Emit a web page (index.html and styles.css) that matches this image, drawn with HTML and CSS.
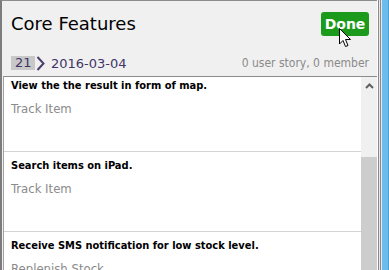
FILE: index.html
```html
<!DOCTYPE html>
<html lang="en">
<head>
  <meta charset="UTF-8">
  <title>Core Features</title>
  <link rel="stylesheet" href="styles.css">
</head>
<body>
  <div class="screen">
    <div class="window">
      <div class="header">
        <div class="title-row">
          <h1>Core Features</h1>
          <button class="done">Done</button>
        </div>
        <div class="meta-row">
          <span class="crumb-num">21</span>
          <svg class="crumb-arrow" width="9" height="15" viewBox="0 0 9 15"><path d="M1.5 1 L7.5 7.5 L1.5 14" fill="none" stroke="#4b3f6b" stroke-width="2"/></svg>
          <span class="crumb-date">2016-03-04</span>
          <span class="stats">0 user story, 0 member</span>
        </div>
      </div>
      <div class="list-box">
        <div class="list">
          <div class="item first">
            <div class="item-title">View the the result in form of map.</div>
            <div class="item-sub">Track Item</div>
          </div>
          <div class="item">
            <div class="item-title">Search items on iPad.</div>
            <div class="item-sub">Track Item</div>
          </div>
          <div class="item">
            <div class="item-title">Receive SMS notification for low stock level.</div>
            <div class="item-sub">Replenish Stock</div>
          </div>
        </div>
        <div class="scrollbar">
          <div class="scroll-up">
            <svg width="9" height="6" viewBox="0 0 9 6"><path d="M1 5 L4.5 1.5 L8 5" fill="none" stroke="#606060" stroke-width="2"/></svg>
          </div>
          <div class="scroll-thumb"></div>
        </div>
      </div>
    </div>
    <div class="edge"></div>
    <svg class="cursor" width="13" height="20" viewBox="0 0 13 20"><path d="M0.5 0.5 L0.5 16 L4 12.5 L6.5 18.5 L9 17.5 L6.5 11.5 L11.5 11.5 Z" fill="#fff" stroke="#000" stroke-width="1"/></svg>
  </div>
</body>
</html>
```
FILE: styles.css
```css
body {
  margin: 0;
  font-family: 'DejaVu Sans', Tahoma, sans-serif;
  background: #fff;
}

.screen {
  position: relative;
  display: flex;
  width: 389px;
  height: 270px;
  overflow: hidden;
}

.window {
  flex: 1;
  display: flex;
  flex-direction: column;
  border-top: 1px solid #8c8c8c;
  border-left: 2px solid #7c7c7c;
  background: #f0f0f0;
}

.edge {
  width: 12px;
  background: linear-gradient(to right,
    #fff 0, #fff 1px,
    #8a8a8a 1px, #8a8a8a 2px,
    #e8e8e8 2px, #e8e8e8 3px,
    #8a8a8a 3px, #8a8a8a 4px,
    #e8e8e8 4px, #e8e8e8 5px,
    #6bbdee 5px, #6bbdee 11px,
    #4f9fd0 11px);
}

.header {
  height: 75px;
  padding: 0 0 0 9px;
  box-sizing: border-box;
}

.title-row {
  display: flex;
  align-items: center;
  justify-content: space-between;
  height: 45px;
  padding-right: 8px;
}

h1 {
  margin: 0;
  font-size: 18px;
  font-weight: normal;
  color: #000;
}

.done {
  width: 48px;
  height: 24px;
  border: none;
  border-radius: 3px;
  background: #1b9a1b;
  color: #fff;
  font-family: inherit;
  font-size: 14px;
  font-weight: bold;
  padding: 0;
  margin-top: 1px;
}

.meta-row {
  display: flex;
  align-items: center;
  height: 16px;
  margin-top: 9px;
  padding-right: 8px;
}

.crumb-num {
  display: inline-block;
  width: 24px;
  height: 14px;
  line-height: 14px;
  background: #c8c8c8;
  color: #3f3566;
  font-size: 13px;
  padding-left: 4px;
  box-sizing: border-box;
}

.crumb-arrow {
  margin: 0 6px 0 1px;
}

.crumb-date {
  color: #3f3566;
  font-size: 13px;
}

.stats {
  margin-left: auto;
  color: #8a8a8a;
  font-family: 'DejaVu Sans Condensed', 'DejaVu Sans', sans-serif;
  font-stretch: condensed;
  font-size: 12px;
}

.list-box {
  flex: 1;
  display: flex;
  margin-left: 1px;
  border-top: 1px solid #8c8c8c;
  border-left: 1px solid #a0a0a0;
  background: #fff;
  overflow: hidden;
}

.list {
  flex: 1;
}

.item {
  height: 80px;
  padding: 7px 0 0 7px;
  box-sizing: border-box;
  border-bottom: 1px solid #d4d4d4;
}

.item.first {
  height: 75px;
  padding-top: 2px;
}

.item-title {
  font-family: 'DejaVu Sans Condensed', 'DejaVu Sans', sans-serif;
  font-stretch: condensed;
  font-size: 11px;
  font-weight: bold;
  color: #000;
  height: 14px;
  line-height: 14px;
}

.item-sub {
  margin-top: 8px;
  font-family: 'DejaVu Sans Condensed', 'DejaVu Sans', sans-serif;
  font-stretch: condensed;
  font-size: 13px;
  color: #8a8a8a;
}

.scrollbar {
  width: 16px;
  background: #f0f0f0;
  display: flex;
  flex-direction: column;
}

.scroll-up {
  height: 17px;
  display: flex;
  align-items: center;
  justify-content: center;
}

.scroll-thumb {
  margin-top: 63px;
  flex: 1;
  background: #cdcdcd;
}

.cursor {
  position: absolute;
  left: 339px;
  top: 28px;
}
```
